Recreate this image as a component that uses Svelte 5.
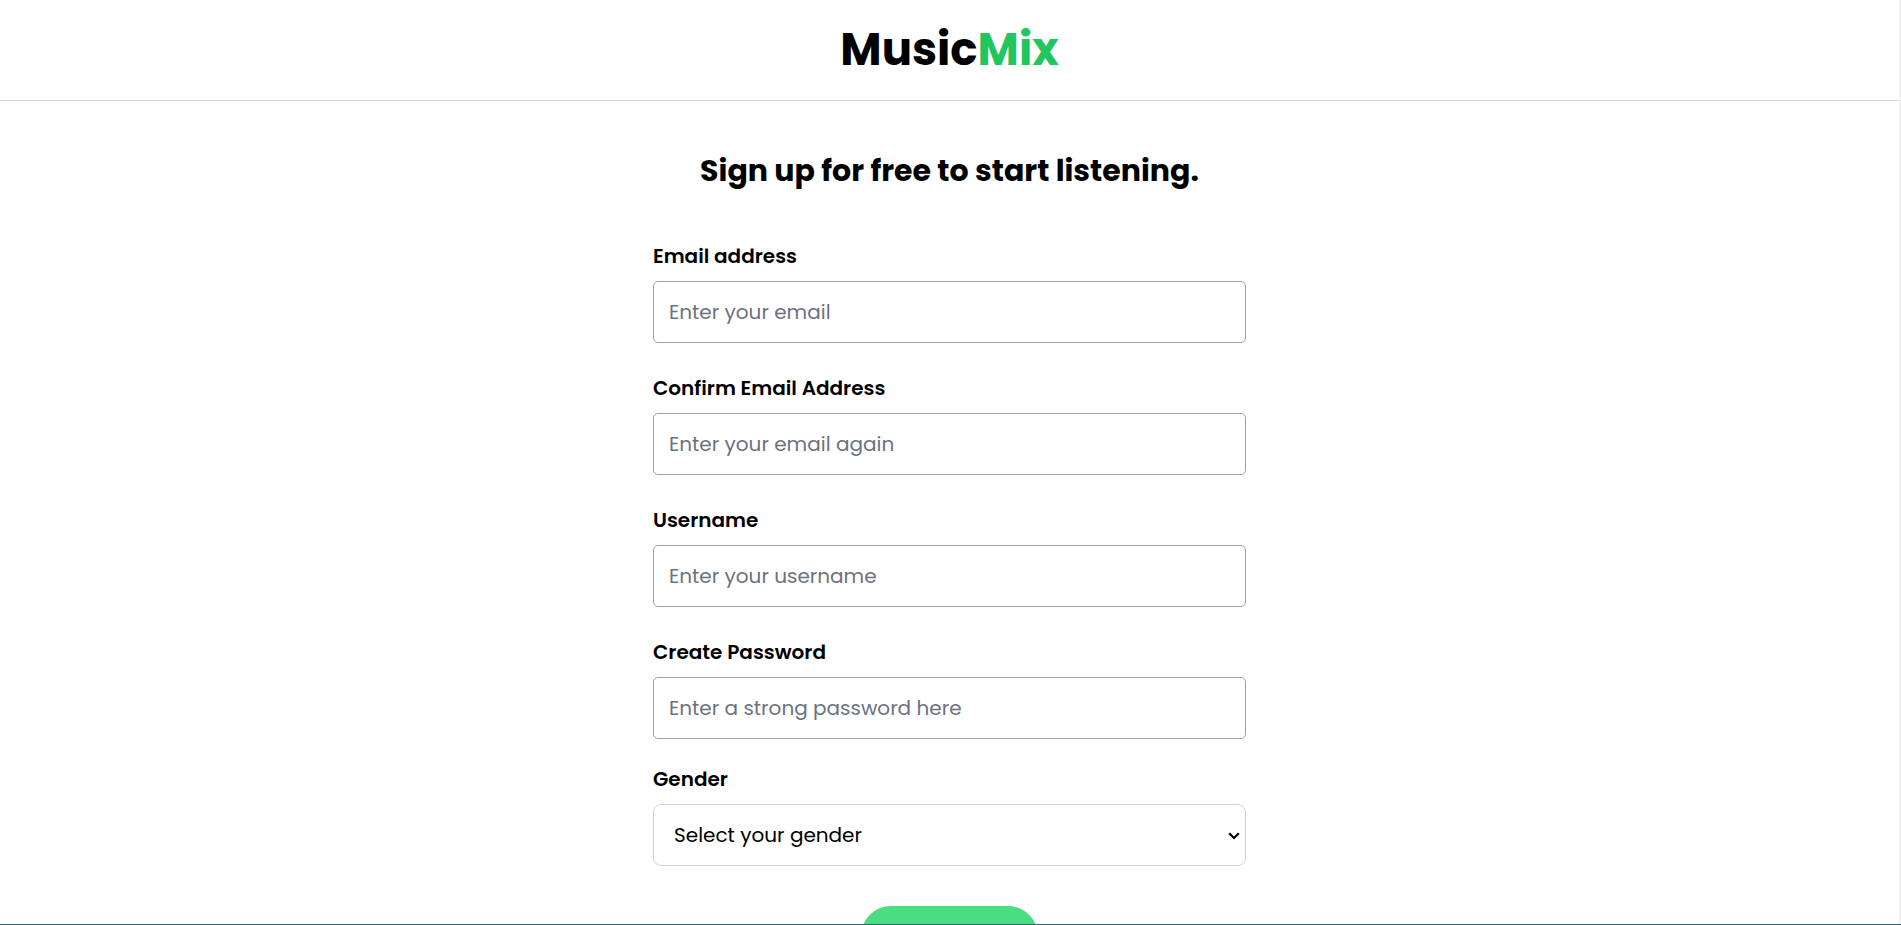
<script>
  const fields = [
    { id: 'email', label: 'Email address', type: 'email', placeholder: 'Enter your email' },
    { id: 'confirm-email', label: 'Confirm Email Address', type: 'email', placeholder: 'Enter your email again' },
    { id: 'username', label: 'Username', type: 'text', placeholder: 'Enter your username' },
    { id: 'password', label: 'Create Password', type: 'password', placeholder: 'Enter a strong password here' }
  ];
</script>

<div class="window">
  <div class="page">
    <header class="top">
      <div class="logo">Music<span class="accent">Mix</span></div>
    </header>
    <main class="content">
      <h1>Sign up for free to start listening.</h1>
      <form>
        {#each fields as field (field.id)}
          <div class="field">
            <label for={field.id}>{field.label}</label>
            <input id={field.id} type={field.type} placeholder={field.placeholder} />
          </div>
        {/each}
        <div class="field gender">
          <label for="gender">Gender</label>
          <div class="select-box">
            <select id="gender">
              <option>Select your gender</option>
            </select>
            <svg class="chevron" viewBox="0 0 12 8" aria-hidden="true">
              <path d="M1.2 1.2 L6 6 L10.8 1.2" fill="none" stroke="#000" stroke-width="2.2" />
            </svg>
          </div>
        </div>
        <button type="submit">Sign up</button>
      </form>
    </main>
  </div>
</div>

<style>
  :global(body) {
    margin: 0;
    background: #fff;
  }
  .window {
    box-sizing: border-box;
    height: 100vh;
    overflow: hidden;
    display: flex;
    flex-direction: column;
    border-bottom: 1px solid #2f6472;
    font-family: Poppins, Inter, "Open Sans", sans-serif;
    color: #000;
  }
  .page {
    flex: 1;
    min-height: 0;
    overflow: hidden;
    border-right: 2px solid #f0f0f0;
  }
  .top {
    display: flex;
    justify-content: center;
    padding: 20px 0;
    border-bottom: 1px solid #d1d5db;
  }
  .logo {
    font-size: 45px;
    line-height: 60px;
    font-weight: 700;
  }
  .accent {
    color: #22c55e;
  }
  .content {
    box-sizing: border-box;
    width: 33.3333%;
    margin: 0 auto;
    padding: 48px 20px;
  }
  h1 {
    margin: 0 0 48px;
    font-size: 30px;
    line-height: 44px;
    font-weight: 700;
    text-align: center;
    white-space: nowrap;
  }
  form {
    display: flex;
    flex-direction: column;
  }
  .field {
    display: flex;
    flex-direction: column;
    gap: 10px;
    margin-bottom: 30px;
  }
  .field:nth-child(4) {
    margin-bottom: 25px;
  }
  .gender {
    margin-bottom: 40px;
  }
  label {
    font-size: 20px;
    line-height: 30px;
    font-weight: 600;
  }
  input,
  select {
    box-sizing: border-box;
    width: 100%;
    height: 62px;
    padding: 0 15px;
    border: 1px solid #9ca3af;
    border-radius: 5px;
    background: #fff;
    color: #000;
    font-family: inherit;
    font-size: 20px;
    outline: none;
  }
  input::placeholder {
    color: #6b7280;
    opacity: 1;
  }
  .select-box {
    display: flex;
    position: relative;
  }
  select {
    appearance: none;
    padding: 0 20px;
    border-color: #d1d5db;
    border-radius: 8px;
  }
  .chevron {
    position: absolute;
    top: 28px;
    right: 6px;
    width: 12px;
    height: 8px;
    pointer-events: none;
  }
  button {
    align-self: center;
    height: 60px;
    padding: 0 50px;
    border: 0;
    border-radius: 30px;
    background: #4ade80;
    color: #000;
    font-family: inherit;
    font-size: 20px;
    line-height: 20px;
    font-weight: 600;
  }
</style>
